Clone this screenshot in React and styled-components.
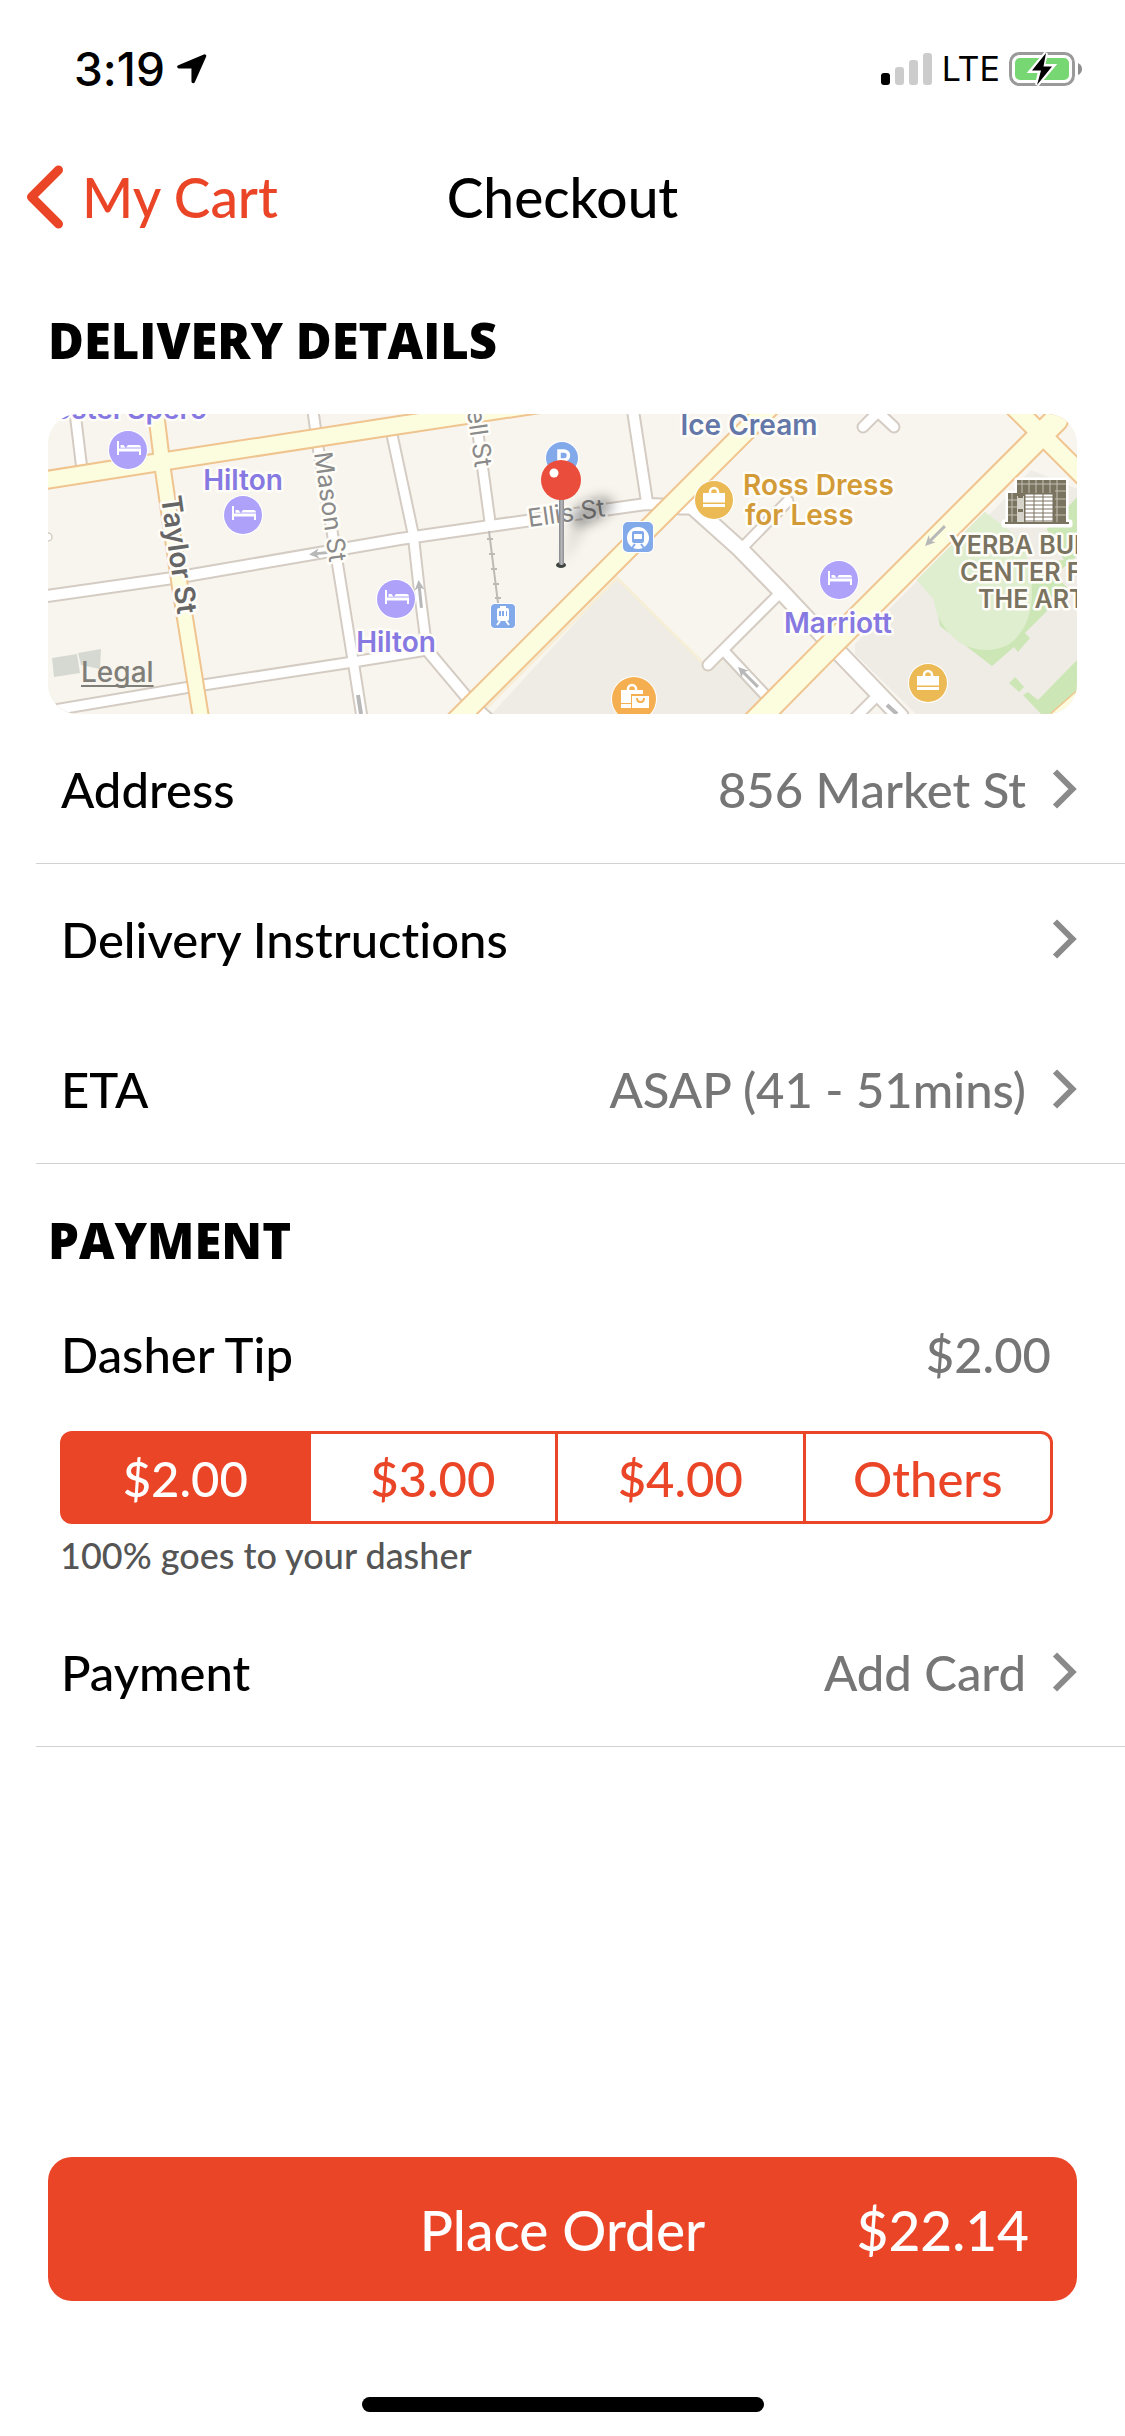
import React, { useState } from "react";
import styled, { createGlobalStyle } from "styled-components";

const brand = "#eb4528";
const textFont = `Lato, "Open Sans", "Liberation Sans", sans-serif`;
const systemFont = `Inter, Roboto, "Liberation Sans", sans-serif`;

const GlobalStyle = createGlobalStyle`
  *, *::before, *::after { box-sizing: border-box; }
  html { -webkit-text-size-adjust: 100%; }
  body {
    margin: 0;
    background: #fff;
    color: #000;
    font-family: ${textFont};
    font-variant-ligatures: none;
  }
  button, input { font: inherit; font-variant-ligatures: none; }
`;

const Page = styled.div`
  display: flex;
  flex-direction: column;
  min-height: 100vh;
  background: #fff;
`;

const StatusBar = styled.div`
  display: flex;
  align-items: center;
  justify-content: space-between;
  height: 132px;
  padding: 6px 42px 0 74px;
  font-family: ${systemFont};
`;

const StatusGroup = styled.div`
  display: flex;
  align-items: center;
  gap: ${(p) => p.$gap}px;
`;

const Clock = styled.span`
  font-size: 46px;
  line-height: 56px;
  font-weight: 500;
`;

const Network = styled.span`
  font-size: 34px;
  line-height: 44px;
  font-weight: 400;
`;

const NavBar = styled.header`
  display: grid;
  grid-template-columns: 1fr auto 1fr;
  align-items: center;
  height: 132px;
  padding: 0 26px 2px;
`;

const BackLink = styled.a`
  display: flex;
  align-items: center;
  gap: 18px;
  justify-self: start;
  color: ${brand};
  font-size: 55px;
  line-height: 64px;
  font-weight: 500;
  text-decoration: none;
`;

const Title = styled.h1`
  margin: 0;
  font-size: 55px;
  line-height: 64px;
  font-weight: 500;
`;

const SectionHeading = styled.h2`
  margin: 0;
  padding: ${(p) => (p.$compact ? "46px 48px 0" : "46px 48px 44px")};
  font-family: "Open Sans", Lato, sans-serif;
  font-size: 49px;
  line-height: 60px;
  font-weight: 800;
`;

const MapCard = styled.div`
  position: relative;
  height: 300px;
  margin: 0 48px;
  border-radius: 30px;
  overflow: hidden;
  background: #f8f5ee;
`;

const MapDrawing = styled.svg`
  display: block;
  width: 100%;
  height: 100%;
  font-family: ${systemFont};
`;

const LegalLink = styled.a`
  position: absolute;
  left: 33px;
  bottom: 24px;
  color: #807e79;
  font-family: ${systemFont};
  font-size: 28px;
  line-height: 36px;
  font-weight: 500;
  text-underline-offset: 3px;
  text-decoration-thickness: 2px;
  text-decoration-skip-ink: none;
`;

const MapLabel = styled.text`
  fill: ${(p) => p.$color};
  font-size: ${(p) => p.$size || 28}px;
  font-weight: ${(p) => p.$weight || 600};
  text-anchor: ${(p) => p.$anchor || "middle"};
  stroke: #fffdf8;
  stroke-width: 5px;
  stroke-linejoin: round;
  paint-order: stroke;
`;

const Row = styled.button`
  display: flex;
  align-items: center;
  align-self: stretch;
  height: 150px;
  margin: 0 0 0 36px;
  padding: 1px 48px 0 25px;
  border: 0;
  border-bottom: 1px solid ${(p) => (p.$divider ? "#d2d2d2" : "transparent")};
  background: none;
  color: #000;
  font-size: 49px;
  line-height: 60px;
  font-weight: 500;
  text-align: left;
  cursor: pointer;
`;

const RowValue = styled.span`
  margin-left: auto;
  margin-right: 26px;
  color: #767676;
`;

const TipRow = styled.div`
  display: flex;
  justify-content: space-between;
  padding: 54px 74px 0 61px;
  font-size: 49px;
  line-height: 60px;
  font-weight: 500;
`;

const TipValue = styled.output`
  color: #767676;
`;

const TipChoices = styled.fieldset`
  display: grid;
  grid-template-columns: repeat(4, 1fr);
  grid-auto-rows: 87px;
  gap: 3px;
  min-width: 0;
  margin: 47px 72px 0 60px;
  padding: 3px;
  border: 0;
  border-radius: 12px;
  background: ${brand};
`;

const TipOption = styled.label`
  display: flex;
  align-items: center;
  justify-content: center;
  background: #fff;
  color: ${brand};
  font-size: 49px;
  line-height: 60px;
  font-weight: 500;
  cursor: pointer;

  &:first-child { border-radius: 9px 0 0 9px; }
  &:last-child { border-radius: 0 9px 9px 0; }

  &:has(input:checked) {
    background: ${brand};
    color: #fff;
  }
`;

const HiddenRadio = styled.input`
  appearance: none;
  width: 0;
  height: 0;
  margin: 0;
`;

const Caption = styled.p`
  margin: 10px 60px 21px;
  color: #555;
  font-size: 36px;
  line-height: 42px;
  font-weight: 500;
`;

const Footer = styled.footer`
  display: flex;
  flex-direction: column;
  align-items: center;
  gap: 96px;
  margin-top: auto;
  padding: 48px 48px 24px;
`;

const OrderButton = styled.button`
  display: grid;
  grid-template-columns: 1fr auto 1fr;
  align-items: center;
  align-self: stretch;
  height: 144px;
  padding: 2px 48px 0;
  border: 0;
  border-radius: 24px;
  background: ${brand};
  color: #fff;
  font-size: 55px;
  line-height: 64px;
  font-weight: 500;
  cursor: pointer;
`;

const OrderLabel = styled.span`
  grid-column: 2;
`;

const OrderTotal = styled.span`
  justify-self: end;
`;

const HomeIndicator = styled.div`
  width: 402px;
  height: 15px;
  border-radius: 8px;
  background: #000;
`;

function LocationArrow() {
  return (
    <svg width="30" height="30" viewBox="0 0 30 30" aria-hidden="true">
      <path
        d="M27.500 2L2 12.800H16.200V27.500Z"
        stroke="#000"
        strokeWidth="3.500"
        strokeLinejoin="round"
      />
    </svg>
  );
}

function Signal() {
  return (
    <svg width="52" height="34" viewBox="0 0 52 34" aria-hidden="true">
      <rect x="0" y="21" width="9" height="12" rx="3" />
      <rect x="14" y="15" width="9" height="18" rx="3" fill="#ccc" />
      <rect x="28" y="8" width="9" height="25" rx="3" fill="#ccc" />
      <rect x="42" y="1" width="9" height="32" rx="3" fill="#ccc" />
    </svg>
  );
}

function Battery() {
  return (
    <svg width="74" height="36" viewBox="0 0 74 36" aria-hidden="true">
      <rect x="1.500" y="2.500" width="63" height="31" rx="9" fill="none" stroke="#9a9a9a" strokeWidth="3" />
      <rect x="6" y="7" width="54" height="22" rx="5" fill="#77d773" />
      <path d="M69 12Q73 14 73 18T69 24Z" fill="#8e8e8e" />
      <path d="M37 2L22 20H31L28 34L44 15H34Z" stroke="#fff" strokeWidth="4" />
      <path d="M37 2L23 19.500H32L28 34L43 15.500H34.500Z" />
    </svg>
  );
}

function BackChevron() {
  return (
    <svg width="38" height="64" viewBox="0 0 38 64" aria-hidden="true">
      <path d="M32.500 5L5.500 32L32.500 59" fill="none" stroke={brand} strokeWidth="9" strokeLinecap="round" strokeLinejoin="round" />
    </svg>
  );
}

function RowChevron() {
  return (
    <svg width="25" height="40" viewBox="0 0 25 40" aria-hidden="true">
      <path d="M3 2.500L20.500 20L3 37.500" fill="none" stroke="#8a8a8a" strokeWidth="6" />
    </svg>
  );
}

const yellowRoads = [
  ["40,481 160,462 400,425 540,404", 16],
  ["155,404 163,470 180,587 202,724", 14],
  ["452,724.7 786,390.700", 18],
  ["753,724 820,656 1056,420", 22],
  ["1001,394 1087,480", 17],
];

const whiteRoads = [
  ["74,404 82,470", 9],
  ["312,404 318,447 338,567 353,660 363,724", 9],
  ["391,430 413,533 419,587 427,650", 9],
  ["427,650 474,706 496,726", 10],
  ["474,404 490,522", 9],
  ["40,597 180,577 400,539 490,526 646,504 680,505", 10],
  ["680,506 692,506 740,549 780,590 826,639 900,716", 15],
  ["48,711 190,687 353,662 427,650", 9],
  ["632,404 647,502", 10],
  ["788,501 745,545", 9],
  ["776,597 708,665", 9],
  ["725,652 768,698", 9],
  ["873,700 855,718", 9],
  ["863,427 878,412 894,427", 9],
];

function Roads({ list, fill, edge }) {
  const shared = { fill: "none", strokeLinejoin: "round", strokeLinecap: "round" };
  return (
    <g>
      {list.map(([points, width]) => (
        <polyline key={points} points={points} stroke={edge} strokeWidth={width + 4} {...shared} />
      ))}
      {list.map(([points, width]) => (
        <polyline key={points} points={points} stroke={fill} strokeWidth={width} {...shared} />
      ))}
    </g>
  );
}

function HotelPin({ x, y }) {
  return (
    <g transform={`translate(${x} ${y})`}>
      <circle r="20" fill="#fff" />
      <circle r="19" fill="#ada1f9" />
      <path d="M-11-9h2v7.500h22V5h-2V1.500H-9V5h-2Z" fill="#fff" />
      <path d="M-7.500-5h3l2 2.700h-5ZM-2-2.500L0-5h11q2 0 2 2.500Z" fill="#fff" />
    </g>
  );
}

function ShopPin({ x, y }) {
  return (
    <g transform={`translate(${x} ${y})`}>
      <circle r="20" fill="#fff" />
      <circle r="19" fill="#ebba55" />
      <path d="M-4-7v-1a4 4 0 0 1 8 0v1" fill="none" stroke="#fff" strokeWidth="2.500" />
      <path d="M-11-7h22V2.500h-22ZM-11 4h22v3h-22Z" fill="#fff" />
    </g>
  );
}

function DirectionArrow({ x, y, angle }) {
  return (
    <g transform={`translate(${x} ${y}) rotate(${angle})`} fill="#b8b8b8">
      <path d="M-14 0L-4-5L-6-1.500H14V1.500H-6L-4 5Z" />
    </g>
  );
}

function MuseumIcon() {
  return (
    <g>
      <path d="M1017 480h49v42h4v3h-66v-3h4v-29h9Z" fill="#fff" stroke="#fff" strokeWidth="5" strokeLinejoin="round" />
      <path d="M1017 480h49v43h-58v-30h9Z" fill="#7a7360" />
      <path d="M1022 480v13M1029 480v13M1036 480v13M1043 480v13M1050 480v13M1057 480v43M1017 484h49M1055 491h11M1055 499h11M1055 507h11M1055 515h11M1012 493v30M1008 500h9M1008 507h9M1008 515h9" stroke="#c4c0b3" strokeWidth="1" />
      <rect x="1017" y="496" width="7" height="27" fill="#d6d3ca" />
      <path d="M1018 495h5v3h-5ZM1018 509h5v3h-5Z" fill="#7a7360" />
      <path d="M1025 494h28v29h-28Z" fill="#fff" />
      <path d="M1025 494h28v29M1025 494v29M1034 494v29M1043 494v29M1025 497h28M1025 501h28M1025 505h28M1025 509h28M1025 513h28M1025 517h28M1025 521h28" fill="none" stroke="#7a7360" strokeWidth="1" />
      <path d="M1005 523h64" stroke="#7a7360" strokeWidth="2" />
    </g>
  );
}

function DeliveryMap() {
  return (
    <MapDrawing viewBox="48 414 1029 300" preserveAspectRatio="xMidYMid slice" role="img" aria-label="Map of the delivery address">
      <defs>
        <filter id="soft" x="-50%" y="-50%" width="200%" height="200%">
          <feGaussianBlur stdDeviation="6" />
        </filter>
        <linearGradient id="stem" x1="0" x2="1">
          <stop offset="0" stopColor="#85858a" />
          <stop offset=".5" stopColor="#b5b6ba" />
          <stop offset="1" stopColor="#8c8c90" />
        </linearGradient>
      </defs>

      <rect x="48" y="414" width="1029" height="300" fill="#f8f5ee" />
      <path d="M617 577L710 670L724 658L764 698L748 716H490Z" fill="#eeece5" />
      <path d="M615 576L710 670L725 657M617 578L480 714" fill="none" stroke="#f7eed8" strokeWidth="3" />
      <path d="M913 585L855 644V654L918 716H1080V490L1031 470L996 508Z" fill="#eeece5" />
      <path d="M1030 472L998 506L1014 524L1078 520V500Z" fill="#eeece5" />
      <path d="M1080 494L1046 530L1064 560L1010 566L985 512L917 580L935 600L940 626L992 666L1014 647L1018 652L1030 638L1025 633L1066 592L1080 580Z" fill="#cce6b5" />
      <path d="M985 512L917 580L934 600Q936 624 960 643Q984 656 1008 645Q1032 628 1032 592Q1032 550 1010 531Z" fill="#dfeecf" />
      <path d="M1055 575L1077 556V598ZM1022 530L1046 528L1060 552L1034 560Z" fill="#eeece5" />
      <path d="M1015 677L1024 687L1019 692L1009 683ZM1080 657L1038 700L1028 692L1023 695L1041 714H1055L1080 690Z" fill="#cce6b5" />
      <path d="M1080 688L1048 716H1080Z" fill="#fcfcdf" stroke="#f0c48f" strokeWidth="1.500" />
      <path d="M52 658L77 654L80 673L54 677ZM78 653L101 649L100 669L81 665Z" fill="#d5d9d1" />

      <Roads list={whiteRoads} fill="#fff" edge="#d4ccc3" />
      <Roads list={yellowRoads} fill="#fcfcdf" edge="#f0c48f" />
      <circle cx="48" cy="537" r="4" fill="#fff" stroke="#d4ccc3" strokeWidth="1.500" />

      <path d="M489 531L498 603M487 539h6M489 554h6M491 569h6M493 584h6M495 598h6" fill="none" stroke="#bdbab5" strokeWidth="2" />

      <DirectionArrow x={323} y={553} angle={-6} />
      <DirectionArrow x={420} y={594} angle={84} />
      <DirectionArrow x={935} y={536} angle={-45} />
      <DirectionArrow x={748} y={677} angle={45} />
      <path d="M358 695L361 714M887 705L897 714" stroke="#b8b8b8" strokeWidth="4" />

      <MapLabel $color="#666" transform="translate(161 497) rotate(82)" $anchor="start">Taylor St</MapLabel>
      <MapLabel $color="#8a8a8a" transform="translate(314 453) rotate(82)" $anchor="start" $size={25} $weight={400}>Mason St</MapLabel>
      <MapLabel $color="#8a8a8a" transform="translate(475 468) rotate(82)" $anchor="end" $size={25} $weight={400}>Powell St</MapLabel>

      <g>
        <circle cx="562" cy="458" r="17" fill="#fff" />
        <circle cx="562" cy="458" r="16" fill="#82a9ea" />
        <path d="M559 466V451h5a4 4 0 0 1 0 9h-5" fill="none" stroke="#fff" strokeWidth="3.500" />
      </g>
      <MapLabel $color="#8a8a8a" transform="translate(529 527) rotate(-8)" $anchor="start" $size={25} $weight={400}>Ellis St</MapLabel>

      <MapLabel $color="#8679e2" x="207" y="419" $anchor="end">Hostel Spero</MapLabel>
      <MapLabel $color="#8679e2" x="243" y="490">Hilton</MapLabel>
      <MapLabel $color="#8679e2" x="396" y="652">Hilton</MapLabel>
      <MapLabel $color="#8679e2" x="838" y="633">Marriott</MapLabel>
      <MapLabel $color="#6477a9" x="749" y="435">Ice Cream</MapLabel>
      <MapLabel $color="#d39b37" x="743" y="495" $anchor="start">Ross Dress</MapLabel>
      <MapLabel $color="#d39b37" x="745" y="525" $anchor="start">for Less</MapLabel>
      <MapLabel $color="#7a7360" x="949" y="554" $anchor="start" $size={25}>YERBA BUENA</MapLabel>
      <MapLabel $color="#7a7360" x="960" y="581" $anchor="start" $size={25}>CENTER FOR</MapLabel>
      <MapLabel $color="#7a7360" x="978" y="608" $anchor="start" $size={25}>THE ARTS</MapLabel>
      <MuseumIcon />

      <HotelPin x={128} y={450} />
      <HotelPin x={243} y={515} />
      <HotelPin x={396} y={599} />
      <HotelPin x={839} y={580} />
      <ShopPin x={714} y={500} />
      <ShopPin x={928} y={683} />

      <g>
        <circle cx="634" cy="699" r="23" fill="#fff" />
        <circle cx="634" cy="699" r="22" fill="#f5af50" />
        <path d="M628 691v-2a4 4 0 0 1 8 0v2" fill="none" stroke="#fff" strokeWidth="2.500" />
        <path d="M621 690h22v4h-12v9h-10ZM621 704h10v4h-10ZM632 696h17v12h-17Z" fill="#fff" />
        <path d="M637 698q0 4 3.500 4t3.500-4" fill="none" stroke="#f5af50" strokeWidth="2" />
      </g>

      <g>
        <rect x="622" y="521" width="32" height="32" rx="6" fill="#fff" />
        <rect x="623" y="522" width="30" height="30" rx="5" fill="#82a9ea" />
        <circle cx="638" cy="538" r="11" fill="#fff" />
        <rect x="632" y="531" width="12" height="12" rx="2" fill="#82a9ea" />
        <rect x="634" y="534" width="8" height="5" fill="#fff" />
        <path d="M635 544l-3 4M641 544l3 4" stroke="#82a9ea" strokeWidth="2" />
      </g>
      <g>
        <rect x="490" y="603" width="26" height="26" rx="5" fill="#fff" />
        <rect x="491" y="604" width="24" height="24" rx="4" fill="#82a9ea" />
        <rect x="497" y="608" width="12" height="13" rx="2" fill="#fff" />
        <path d="M500 607h6M500 621l-3 4M506 621l3 4" stroke="#fff" strokeWidth="2" />
        <path d="M499 611h2v5h-2ZM502 611h2v5h-2ZM506 611h1v5h-1Z" fill="#82a9ea" />
      </g>

      <g filter="url(#soft)" fill="#000">
        <ellipse cx="592" cy="511" rx="23" ry="11" opacity=".32" transform="rotate(-25 592 511)" />
        <path d="M563 565L574 518L590 520Z" opacity=".12" />
      </g>
      <ellipse cx="561" cy="565" rx="5" ry="3" fill="#3f4440" />
      <rect x="559" y="496" width="5" height="69" rx="2" fill="url(#stem)" />
      <circle cx="561" cy="480" r="20" fill="#eb4d3d" />
      <circle cx="554" cy="473" r="4.500" fill="#fff" />
    </MapDrawing>
  );
}

function DetailRow({ label, value, divider }) {
  return (
    <Row type="button" $divider={divider}>
      <span>{label}</span>
      <RowValue>{value}</RowValue>
      <RowChevron />
    </Row>
  );
}

const tips = ["$2.00", "$3.00", "$4.00", "Others"];

export default function App() {
  const [tip, setTip] = useState(tips[0]);

  return (
    <>
      <GlobalStyle />
      <Page>
        <StatusBar>
          <StatusGroup $gap={12}>
            <Clock>3:19</Clock>
            <LocationArrow />
          </StatusGroup>
          <StatusGroup $gap={9}>
            <Signal />
            <Network>LTE</Network>
            <Battery />
          </StatusGroup>
        </StatusBar>

        <NavBar>
          <BackLink href="#cart">
            <BackChevron />
            My Cart
          </BackLink>
          <Title>Checkout</Title>
        </NavBar>

        <SectionHeading>DELIVERY DETAILS</SectionHeading>
        <MapCard>
          <DeliveryMap />
          <LegalLink href="#legal">Legal</LegalLink>
        </MapCard>
        <DetailRow label="Address" value="856 Market St" divider />
        <DetailRow label="Delivery Instructions" />
        <DetailRow label="ETA" value="ASAP (41 - 51mins)" divider />

        <SectionHeading $compact>PAYMENT</SectionHeading>
        <TipRow>
          <span>Dasher Tip</span>
          <TipValue>{tip === "Others" ? "" : tip}</TipValue>
        </TipRow>
        <TipChoices aria-label="Dasher tip">
          {tips.map((option) => (
            <TipOption key={option}>
              <HiddenRadio
                type="radio"
                name="tip"
                value={option}
                checked={tip === option}
                onChange={() => setTip(option)}
              />
              {option}
            </TipOption>
          ))}
        </TipChoices>
        <Caption>100% goes to your dasher</Caption>
        <DetailRow label="Payment" value="Add Card" divider />

        <Footer>
          <OrderButton type="button">
            <OrderLabel>Place Order</OrderLabel>
            <OrderTotal>$22.14</OrderTotal>
          </OrderButton>
          <HomeIndicator />
        </Footer>
      </Page>
    </>
  );
}
